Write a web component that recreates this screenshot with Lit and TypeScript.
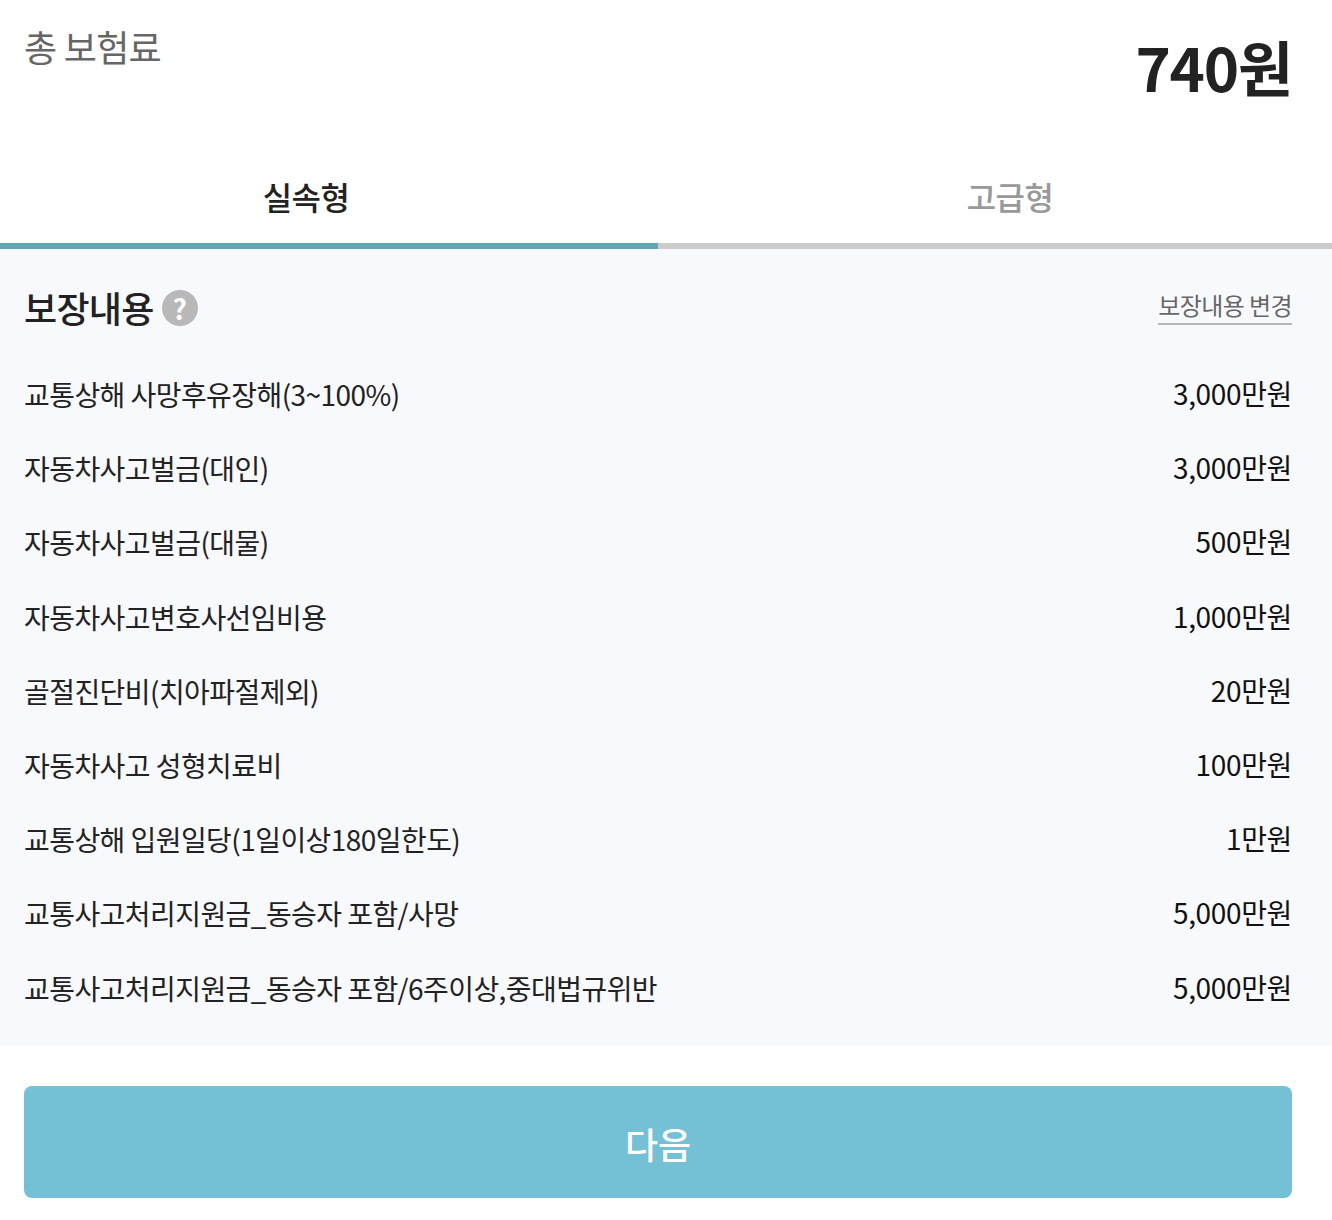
import { LitElement, html, css } from 'lit';
import { customElement } from 'lit/decorators.js';

const rows = [
  ['교통상해 사망후유장해(3~100%)', '3,000만원'],
  ['자동차사고벌금(대인)', '3,000만원'],
  ['자동차사고벌금(대물)', '500만원'],
  ['자동차사고변호사선임비용', '1,000만원'],
  ['골절진단비(치아파절제외)', '20만원'],
  ['자동차사고 성형치료비', '100만원'],
  ['교통상해 입원일당(1일이상180일한도)', '1만원'],
  ['교통사고처리지원금_동승자 포함/사망', '5,000만원'],
  ['교통사고처리지원금_동승자 포함/6주이상,중대법규위반', '5,000만원'],
];

@customElement('app-root')
export class AppRoot extends LitElement {
  static styles = css`
    :host {
      display: block;
      width: 1332px;
      height: 1220px;
      background: #fff;
      font-family: "Noto Sans CJK KR", "Noto Sans", sans-serif;
      color: #222;
      overflow: hidden;
    }
    .total {
      display: flex;
      justify-content: space-between;
      align-items: flex-start;
      height: 143px;
      padding: 0 40px 0 24px;
      box-sizing: border-box;
    }
    .total-label {
      font-size: 36px;
      letter-spacing: -0.02em;
      line-height: 50px;
      margin-top: 21px;
      color: #666;
    }
    .total-price {
      font-size: 60px;
      letter-spacing: -0.02em;
      line-height: 80px;
      margin-top: 26px;
      font-weight: 700;
    }
    .tabs {
      display: flex;
    }
    .tab {
      height: 106px;
      box-sizing: border-box;
      display: flex;
      align-items: center;
      justify-content: center;
      font-size: 32px;
      letter-spacing: -0.02em;
      font-weight: 500;
      border-bottom: 6px solid #ccc;
      padding-top: 6px;
    }
    .tab.on {
      width: 658px;
      padding-right: 46px;
      color: #222;
      border-bottom-color: #62a7b6;
    }
    .tab.off {
      flex: 1;
      padding-left: 30px;
      color: #999;
    }
    .content {
      background: #f8f9fd;
      height: 797px;
      padding: 0 40px 0 24px;
      box-sizing: border-box;
    }
    .head {
      display: flex;
      justify-content: space-between;
      align-items: center;
      height: 98px;
      padding-top: 10px;
    }
    .title {
      display: flex;
      align-items: center;
      gap: 8px;
      font-size: 36px;
      letter-spacing: -0.02em;
      font-weight: 500;
    }
    .title-text {
      margin-top: -3px;
    }
    .help {
      width: 36px;
      height: 36px;
      border-radius: 50%;
      background: #b8b8b8;
      color: #fff;
      font-size: 28px;
      font-weight: 700;
      line-height: 36px;
      text-align: center;
      letter-spacing: 0;
    }
    .change {
      font-size: 24px;
      letter-spacing: -0.6px;
      line-height: 36px;
      color: #666;
      border-bottom: 2px solid #b8b8b8;
      margin-bottom: 5px;
    }
    .row {
      display: flex;
      justify-content: space-between;
      align-items: center;
      height: 74.2px;
      font-size: 28px;
      letter-spacing: -0.02em;
    }
    .amount {
      color: #111;
      letter-spacing: -0.35px;
      margin-top: -2px;
    }
    .btn-wrap {
      padding: 40px 40px 0 24px;
    }
    .btn {
      height: 112px;
      border-radius: 8px;
      background: #74c0d5;
      color: #fff;
      font-size: 36px;
      font-weight: 500;
      padding-top: 2px;
      box-sizing: border-box;
      display: flex;
      align-items: center;
      justify-content: center;
    }
  `;

  render() {
    return html`
      <div class="total">
        <div class="total-label">총 보험료</div>
        <div class="total-price">740원</div>
      </div>
      <div class="tabs">
        <div class="tab on">실속형</div>
        <div class="tab off">고급형</div>
      </div>
      <div class="content">
        <div class="head">
          <div class="title"><span class="title-text">보장내용</span><span class="help">?</span></div>
          <div class="change">보장내용 변경</div>
        </div>
        ${rows.map(([name, amount]) => html`
          <div class="row"><span>${name}</span><span class="amount">${amount}</span></div>
        `)}
      </div>
      <div class="btn-wrap"><div class="btn">다음</div></div>
    `;
  }
}
